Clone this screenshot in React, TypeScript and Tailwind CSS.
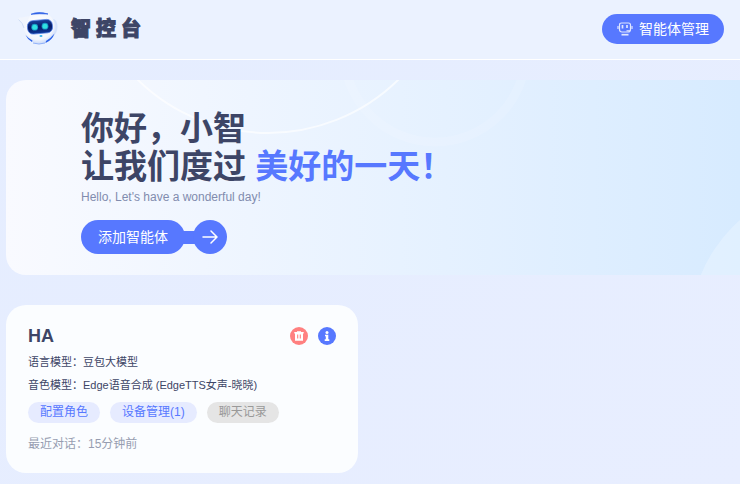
import { useState } from 'react'

function RobotLogo() {
  return (
    <svg viewBox="0 0 42 36" className="h-9 w-[42px]" aria-hidden="true">
      <defs>
        <radialGradient id="shell" cx="45%" cy="40%" r="62%">
          <stop offset="0" stopColor="#ffffff" />
          <stop offset="0.75" stopColor="#f3f6fd" />
          <stop offset="1" stopColor="#c3d5f9" />
        </radialGradient>
        <linearGradient id="visor" x1="0" y1="0" x2="0" y2="1">
          <stop offset="0" stopColor="#1a449f" />
          <stop offset="0.5" stopColor="#061a66" />
          <stop offset="1" stopColor="#103a9a" />
        </linearGradient>
      </defs>
      <ellipse cx="36" cy="16" rx="4.500" ry="8" fill="#d5e3fc" />
      <ellipse cx="23" cy="17" rx="16" ry="15.700" fill="url(#shell)" />
      <path d="M1 8 Q1 6 4 6.500 L13 5 L7 16 Q6 12 1 8Z" fill="#f1f5fd" />
      <path d="M7 17 Q6 12 1.500 8.500" fill="none" stroke="#c8d7f3" strokeWidth="0.800" />
      <path d="M14 3.300 Q21 0 31 3 Q22 2.300 14 3.300Z" fill="#2c60e6" stroke="#2c60e6" strokeWidth="0.700" />
      <path d="M8.500 24 Q10.500 28.500 15 31 L15.500 29.500 Q11.500 27.500 8.500 24Z" fill="#2c63ea" />
      <path d="M37.500 22.500 Q35 29.500 28.500 32 L29 30 Q33.500 27.500 37.500 22.500Z" fill="#2c63ea" />
      <path d="M16 32 Q22 34 28 32" fill="none" stroke="#8fb0f8" strokeWidth="1" />
      <rect x="10.500" y="9" width="25" height="13.500" rx="5.500" fill="url(#visor)" stroke="#4d7ce6" strokeWidth="0.700" transform="rotate(-5 23 16)" />
      <circle cx="17.700" cy="16.200" r="3.400" fill="#1797c4" />
      <circle cx="28" cy="15.200" r="3.400" fill="#1797c4" />
      <circle cx="17.700" cy="16.200" r="2.500" fill="#30e0e2" />
      <circle cx="28" cy="15.200" r="2.500" fill="#30e0e2" />
      <ellipse cx="24" cy="25" rx="1.500" ry="1" fill="#35b2f0" />
    </svg>
  )
}

function RobotIcon() {
  return (
    <svg viewBox="0 0 16 14" className="h-3.5 w-4" fill="none" stroke="#dfe6ff" strokeWidth="1.200" aria-hidden="true">
      <path d="M2.500 3 Q2.500 1 4.500 1 H11.500 Q13.500 1 13.500 3 V7.500 Q13.500 10 11 10 H5 Q2.500 10 2.500 7.500Z" />
      <path d="M1 4 V7 M15 4 V7" />
      <path d="M5.500 3 V6.500 M10 3 V6" strokeWidth="1.700" />
      <path d="M9.500 8.800 H13" />
      <path d="M4.500 12.700 H11.500" strokeWidth="1.700" />
    </svg>
  )
}

function BannerRings() {
  return (
    <svg
      viewBox="0 0 734 195"
      preserveAspectRatio="xMinYMin slice"
      className="pointer-events-none absolute inset-0 h-full w-full"
      fill="none"
      aria-hidden="true"
    >
      <circle cx="262" cy="-133" r="186" stroke="#ffffff" strokeOpacity="0.650" strokeWidth="2" />
      <circle cx="429" cy="-29" r="91" stroke="#ffffff" strokeOpacity="0.120" strokeWidth="9" />
      <circle cx="830" cy="250" r="146" fill="#ffffff" fillOpacity="0.240" />
    </svg>
  )
}

interface AgentProps {
  name: string
  llm: string
  voice: string
  devices: number
  lastChat: string
}

function AgentCard({ name, llm, voice, devices, lastChat }: AgentProps) {
  return (
    <article className="w-full max-w-[352px] rounded-[20px] bg-[#fbfdff] px-[22px] pt-[22px] pb-5">
      <div className="flex h-[18px] items-center justify-between">
        <h2 className="text-lg leading-none font-bold">{name}</h2>
        <div className="flex gap-2.5">
          <button aria-label="删除" className="flex size-[18px] items-center justify-center rounded-full bg-[#ff8080]">
            <svg viewBox="0 0 10 10" className="size-2.5" aria-hidden="true">
              <path d="M0.300 1 H3 V0.200 H7 V1 H9.700 V2.500 H9 V9.800 H1 V2.500 H0.300Z" fill="#fff" />
              <path d="M3.700 3.500 V7.500 M6.300 3.500 V7.500" stroke="#ff8080" strokeWidth="1.100" />
            </svg>
          </button>
          <button aria-label="详情" className="flex size-[18px] items-center justify-center rounded-full bg-[#5778ff]">
            <svg viewBox="0 0 6 10" className="h-2.5 w-1.5" fill="#fff" aria-hidden="true">
              <circle cx="3" cy="1.500" r="1.500" />
              <path d="M1 3.800 H4.300 V8.300 H5.300 V10 H0.700 V8.300 H1.800 V5.300 H1Z" />
            </svg>
          </button>
        </div>
      </div>
      <p className="mt-[9px] text-[11px] leading-4">语言模型：{llm}</p>
      <p className="mt-[7px] text-[11px] leading-4">音色模型：{voice}</p>
      <div className="mt-[9px] flex gap-2.5 text-xs leading-[21px]">
        <button className="rounded-full bg-[#e6ebff] px-3 text-[#5778ff]">配置角色</button>
        <button className="rounded-full bg-[#e6ebff] px-3 text-[#5778ff]">设备管理({devices})</button>
        <button disabled className="rounded-full bg-[#e5e5e5] px-3 text-[#999999]">聊天记录</button>
      </div>
      <p className="mt-3 text-xs leading-[18px] text-[#979db1]">最近对话：{lastChat}</p>
    </article>
  )
}

export default function App() {
  const [agents] = useState<AgentProps[]>([
    { name: 'HA', llm: '豆包大模型', voice: 'Edge语音合成 (EdgeTTS女声-晓晓)', devices: 1, lastChat: '15分钟前' },
  ])

  return (
    <div className="min-h-screen overflow-hidden bg-linear-to-br from-[#e5edff] to-[#e8eeff] font-['Liberation_Sans','Noto_Sans_CJK_SC',sans-serif] text-[#3d4566]">
      <header className="flex h-[60px] items-center justify-between border-b border-white bg-[#ebf2ff] pr-4 pb-px pl-[17px]">
        <div className="flex items-center gap-3">
          <RobotLogo />
          <h1 className="text-xl font-black tracking-[5px] [-webkit-text-stroke:1px_#3d4566]">智控台</h1>
        </div>
        <button className="flex h-[30px] items-center gap-1.5 rounded-full bg-[#5778ff] px-[15px] text-sm text-white">
          <RobotIcon />
          智能体管理
        </button>
      </header>

      <main className="pt-5 pl-1.5">
        <section className="relative overflow-hidden rounded-l-[20px] bg-linear-to-r from-[#f9faff] via-[#e5f1ff] via-60% to-[#d7ebff] pt-[30px] pb-[21px] pl-[75px]">
          <BannerRings />
          <div className="relative">
            <p className="text-[33px] leading-[38px] font-bold">
              你好，小智
              <br />
              让我们度过 <span className="text-[#5778ff]">美好的一天！</span>
            </p>
            <p className="text-xs leading-[22px] text-[#818cae]">Hello, Let's have a wonderful day!</p>
            <button className="mt-3 flex items-center text-sm text-white">
              <span className="flex h-[34px] items-center rounded-full bg-[#5778ff] px-[17px]">添加智能体</span>
              <span className="-mx-1 h-[13px] w-4 bg-[#5778ff]" />
              <span className="flex size-[34px] items-center justify-center rounded-full bg-[#5778ff]">
                <svg viewBox="0 0 16 14" className="h-3.5 w-4" fill="none" stroke="#fff" strokeWidth="1.500" strokeLinecap="round" aria-hidden="true">
                  <path d="M1 7 H15 M9 1 L15 7 L9 13" />
                </svg>
              </span>
            </button>
          </div>
        </section>

        <section className="mt-[30px]">
          {agents.map(agent => (
            <AgentCard key={agent.name} {...agent} />
          ))}
        </section>
      </main>
    </div>
  )
}
